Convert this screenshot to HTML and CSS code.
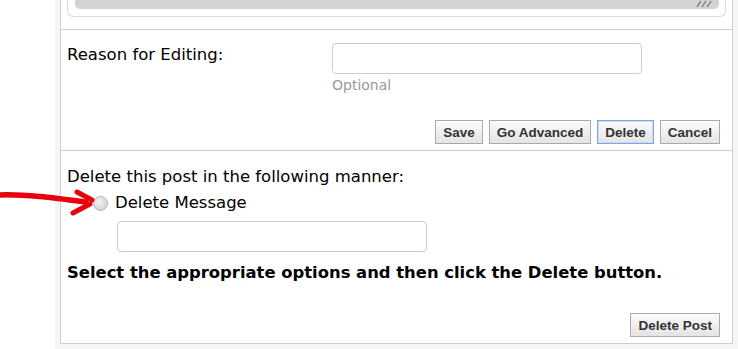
FILE: index.html
```html
<!DOCTYPE html>
<html>
<head>
<meta charset="utf-8">
<link rel="stylesheet" href="styles.css">
</head>
<body>
<div class="page">
  <div class="panel">
    <div class="editor-bottom">
      <div class="editor-box">
        <div class="textarea-bar">
          <svg class="grip" width="16" height="7" viewBox="0 0 16 7"><path d="M1 7 L5 1 M6 7 L10 1 M11 7 L15 1" stroke="#777" stroke-width="1.3"/></svg>
        </div>
      </div>
    </div>

    <div class="section edit-section">
      <div class="reason-row">
        <div class="label">Reason for Editing:</div>
        <div class="field">
          <input class="text-input reason-input" type="text">
          <div class="hint">Optional</div>
        </div>
      </div>
      <div class="actions">
        <button class="btn">Save</button>
        <button class="btn">Go Advanced</button>
        <button class="btn btn-focus">Delete</button>
        <button class="btn">Cancel</button>
      </div>
    </div>

    <div class="section delete-section">
      <div class="manner">Delete this post in the following manner:</div>
      <div class="radio-row"><span class="radio"></span><span>Delete Message</span></div>
      <input class="text-input delete-input" type="text">
      <p class="notice">Select the appropriate options and then click the Delete button.</p>
      <div class="actions bottom-actions">
        <button class="btn">Delete Post</button>
      </div>
    </div>
  </div>

  <svg class="arrow" width="100" height="40" viewBox="0 0 100 40">
    <path d="M-2 10 C 25 9, 55 13, 86 17" stroke="#e8000c" stroke-width="5.5" fill="none" stroke-linecap="round"/>
    <path d="M77 7 L92 15" stroke="#e8000c" stroke-width="5" fill="none" stroke-linecap="round"/>
    <path d="M73 28 L90 19" stroke="#e8000c" stroke-width="5" fill="none" stroke-linecap="round"/>
  </svg>
</div>
</body>
</html>
```

FILE: styles.css
```css
html, body {
  margin: 0;
  padding: 0;
  background: #fff;
}

body {
  font-family: "DejaVu Sans", Verdana, sans-serif;
  color: #000;
}

.page {
  position: relative;
  margin-left: 55px;
  background: #f5f5f5;
  padding: 0 5px 5px 5px;
}

.panel {
  background: #fff;
  border: 1px solid #cfcfcf;
  border-top: none;
}

.editor-bottom {
  height: 29px;
  padding: 0 6px;
  border-bottom: 1px solid #cfcfcf;
}

.editor-box {
  height: 16px;
  border: 1px solid #dcdcdc;
  border-top: none;
  border-radius: 0 0 6px 6px;
  padding: 0 6px 0 7px;
}

.textarea-bar {
  height: 9px;
  background: #d3d3d3;
  border-radius: 0 0 5px 5px;
  display: flex;
  justify-content: flex-end;
  align-items: flex-start;
  padding-right: 7px;
}

.grip {
  display: block;
}

.section {
  padding: 13px 12px 6px 6px;
}

.edit-section {
  border-bottom: 1px solid #cfcfcf;
}

.reason-row {
  display: flex;
}

.label {
  width: 265px;
  padding-top: 2px;
  font-size: 16.5px;
  line-height: 20px;
}

.text-input {
  display: block;
  box-sizing: border-box;
  height: 31px;
  border: 1px solid #cccccc;
  border-radius: 4px;
  background: #fff;
  margin: 0;
}

.reason-input {
  width: 310px;
}

.hint {
  margin-top: 2px;
  font-size: 14px;
  line-height: 18px;
  color: #999;
}

.actions {
  display: flex;
  justify-content: flex-end;
  gap: 6px;
  margin-top: 26px;
}

.btn {
  font-family: "Liberation Sans", Arial, sans-serif;
  font-weight: bold;
  font-size: 13.5px;
  color: #333;
  height: 24px;
  padding: 0 7px;
  border: 1px solid #aaaaaa;
  background: linear-gradient(#fbfbfb, #e4e4e4);
  border-radius: 0;
  margin: 0;
}

.btn-focus {
  border-color: #7ea6e3;
  box-shadow: inset 0 0 0 1px #c9dbf5;
}

.delete-section {
  padding-top: 16px;
  padding-bottom: 6px;
}

.manner {
  font-size: 16.5px;
  line-height: 20px;
}

.radio-row {
  display: flex;
  align-items: center;
  gap: 7px;
  margin-top: 6px;
  margin-left: 26px;
  font-size: 16.5px;
  line-height: 20px;
}

.radio {
  display: inline-block;
  width: 15px;
  height: 15px;
  box-sizing: border-box;
  border-radius: 50%;
  border: 1px solid #b5b5b5;
  background: radial-gradient(circle at 40% 35%, #f2f2f2 0%, #d6d6d6 70%, #c8c8c8 100%);
}

.delete-input {
  width: 310px;
  margin-top: 8px;
  margin-left: 50px;
}

.notice {
  margin: 11px 0 0 0;
  font-weight: bold;
  font-size: 16.4px;
  line-height: 20px;
}

.bottom-actions {
  margin-top: 30px;
}

.arrow {
  position: absolute;
  left: -55px;
  top: 185px;
  overflow: visible;
}
```
